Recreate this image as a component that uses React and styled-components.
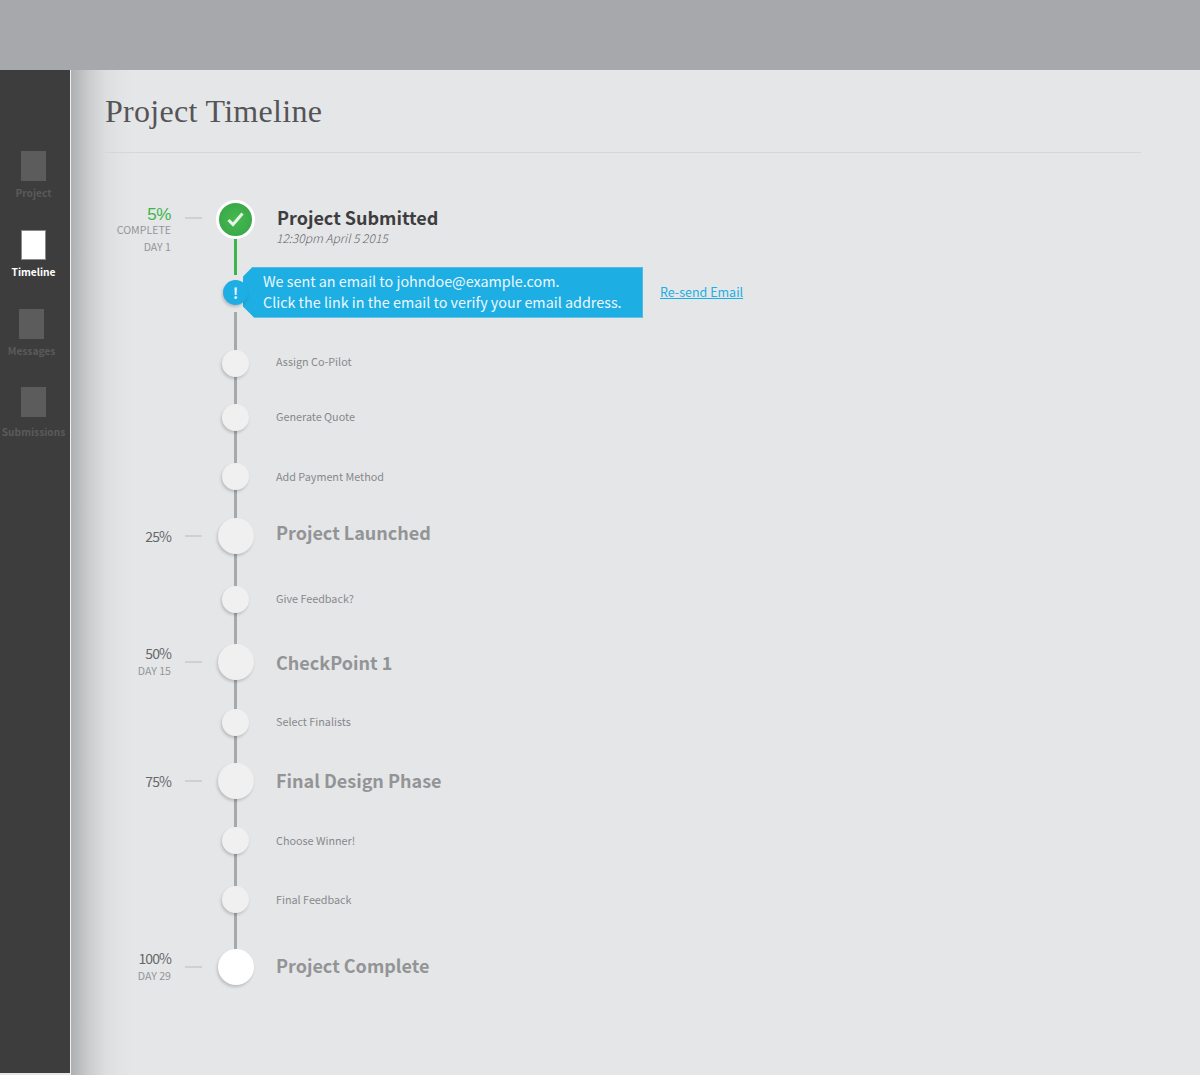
import React from "react";
import styled, { createGlobalStyle } from "styled-components";

const sans = `"Noto Sans CJK SC", "Noto Sans", sans-serif`;

const GlobalStyle = createGlobalStyle`
  html, body {
    margin: 0;
    padding: 0;
    background: #e5e6e8;
    font-family: ${sans};
  }
  * { box-sizing: border-box; }
`;

const Page = styled.div`
  width: 1200px;
  height: 1075px;
  overflow: hidden;
  display: flex;
  flex-direction: column;
`;

const TopBar = styled.div`
  height: 70px;
  flex: none;
  background: #a7a8ab;
`;

const Body = styled.div`
  flex: 1;
  display: flex;
  min-height: 0;
`;

const Sidebar = styled.nav`
  width: 71px;
  flex: none;
  height: 1003px;
  background: #3d3d3d;
  border-right: 1px solid #f2f2f3;
  padding-top: 81px;
  display: flex;
  flex-direction: column;
`;

const NavItem = styled.div`
  height: ${(p) => p.$height}px;
  display: flex;
  flex-direction: column;
  align-items: center;
  padding-right: ${(p) => p.$shift}px;
  font-size: 10.2px;
  font-weight: 700;
  line-height: 16px;
  white-space: nowrap;
  color: ${(p) => (p.$active ? "#ffffff" : "#5a5a5a")};
`;

const NavIcon = styled.div`
  width: 25px;
  height: 30px;
  margin-bottom: ${(p) => p.$gap}px;
  background: ${(p) => (p.$active ? "#ffffff" : "#5c5c5c")};
  border: ${(p) => (p.$active ? "1px solid #8b8b8b" : "none")};
`;

const Main = styled.main`
  flex: 1;
  padding: 0 59px 0 34px;
  background: linear-gradient(90deg, #aeafb1 0, #cbccce 18px, #dcdddf 34px, #e2e3e5 48px, #e5e6e8 62px);
`;

const Title = styled.h1`
  margin: 0;
  height: 83px;
  padding-top: 21px;
  border-bottom: 1px solid #d6d7d9;
  font-family: "Liberation Serif", serif;
  font-size: 32px;
  line-height: 40px;
  font-weight: 400;
  letter-spacing: 0.3px;
  color: #555557;
`;

const Timeline = styled.div`
  padding-top: 46px;
`;

const Row = styled.div`
  position: relative;
  height: ${(p) => p.$height}px;
  display: grid;
  grid-template-columns: 66px 14px 17px 14px 39px 21px 1fr;
  grid-template-rows: 40px;
  align-items: center;

  /* connector down to the next stop */
  &::before {
    content: "";
    display: ${(p) => (p.$last ? "none" : "block")};
    position: absolute;
    left: 129px;
    top: 20px;
    width: 3px;
    height: ${(p) => p.$height}px;
    background: #a7a8aa;
  }
`;

const GreenLine = styled.div`
  position: absolute;
  left: 129px;
  top: 39px;
  width: 3px;
  height: 37px;
  background: #3cb54a;
  z-index: 1;
`;

const GapMask = styled.div`
  position: absolute;
  left: 127px;
  top: 0;
  width: 7px;
  height: 40px;
  background: #e5e6e8;
`;

const Stat = styled.div`
  text-align: right;
  transform: translateY(${(p) => p.$offset || 0}px);
`;

const Percent = styled.div`
  font-family: ${(p) => (p.$green ? `"Liberation Sans", sans-serif` : sans)};
  font-size: ${(p) => (p.$green ? 17 : 14)}px;
  line-height: 15px;
  letter-spacing: ${(p) => (p.$green ? -0.4 : -0.9)}px;
  color: ${(p) => (p.$green ? "#3cb54a" : "#666769")};
`;

const StatLine = styled.div`
  font-size: 10.6px;
  line-height: 15px;
  margin-top: ${(p) => p.$gap || 0}px;
  color: #949597;
`;

const Dash = styled.div`
  grid-column: 3;
  height: 2px;
  background: #cfd0d0;
  transform: translateY(${(p) => p.$nudge || 0}px);
`;

const NodeCell = styled.div`
  grid-column: 5;
  position: relative;
  z-index: 2;
  display: flex;
  justify-content: center;
  align-items: center;
`;

const nodeSize = { small: 27, big: 36, done: 39, alert: 25 };

const Node = styled.div`
  width: ${(p) => nodeSize[p.$kind]}px;
  height: ${(p) => nodeSize[p.$kind]}px;
  border-radius: 50%;
  display: flex;
  align-items: center;
  justify-content: center;
  background: ${(p) =>
    p.$kind === "done"
      ? "radial-gradient(circle, #45b94f 0, #36a447 100%)"
      : p.$kind === "alert"
      ? "#1daee3"
      : p.$white
      ? "#ffffff"
      : "#f0f0f1"};
  border: ${(p) => (p.$kind === "done" ? "3px solid #ffffff" : "none")};
  box-shadow: ${(p) => (p.$kind === "done" ? "none" : "-1px 2px 3px rgba(0, 0, 0, 0.18)")};
  color: #eef7fc;
  font-size: 15px;
  font-weight: 700;
`;

const Content = styled.div`
  grid-column: 7;
  display: flex;
  align-items: center;
  min-width: 0;
  white-space: nowrap;
`;

const StepLabel = styled.div`
  font-size: 10.8px;
  color: #88898b;
  transform: translateY(${(p) => p.$nudge || 0}px);
`;

const Milestone = styled.div`
  font-size: 18px;
  font-weight: 700;
  color: #939496;
  transform: translateY(${(p) => p.$nudge || 0}px);
`;

const HeadingBlock = styled.div`
  padding-top: 13px;
`;

const Heading = styled.div`
  font-size: 18px;
  line-height: 24px;
  font-weight: 700;
  color: #3d3d3f;
  margin-left: 1px;
`;

const Time = styled.div`
  font-size: 12px;
  line-height: 18px;
  font-style: italic;
  font-weight: 300;
  color: #66676a;
`;

const Bubble = styled.div`
  width: 400px;
  height: 51px;
  margin-left: -33px;
  padding: 2px 0 0 20px;
  background: #1daee3;
  border: 1px solid #4dbbe6;
  border-left: none;
  clip-path: polygon(10px 0, 100% 0, 100% 100%, 11px 100%, 0 40px, 0 10px);
  font-size: 14.35px;
  line-height: 21px;
  color: #eef7fc;
`;

const Resend = styled.a`
  margin-left: 17px;
  font-size: 12.5px;
  color: #1daee3;
  text-decoration: underline;
  transform: translateY(-1px);
`;

const CheckMark = () => (
  <svg width="17" height="15" viewBox="0 0 17 15" fill="none">
    <polyline points="1.5,8 6,12.5 15.5,1.5" stroke="#e9f4e6" strokeWidth="3" />
  </svg>
);

const stops = [
  { kind: "step", label: "Assign Co-Pilot", height: 54, nudge: -2 },
  { kind: "step", label: "Generate Quote", height: 59, nudge: -1 },
  { kind: "step", label: "Add Payment Method", height: 60 },
  { kind: "mile", label: "Project Launched", percent: "25%", height: 63, nudge: -4 },
  { kind: "step", label: "Give Feedback?", height: 63, nudge: -1 },
  { kind: "mile", label: "CheckPoint 1", percent: "50%", day: "DAY 15", height: 60 },
  { kind: "step", label: "Select Finalists", height: 59, nudge: -1 },
  { kind: "mile", label: "Final Design Phase", percent: "75%", height: 59, nudge: -1 },
  { kind: "step", label: "Choose Winner!", height: 59 },
  { kind: "step", label: "Final Feedback", height: 68 },
  { kind: "mile", label: "Project Complete", percent: "100%", day: "DAY 29", height: 60, nudge: -2, white: true, last: true },
];

const navItems = [
  { label: "Project", height: 79, shift: 3, gap: 4 },
  { label: "Timeline", height: 79, shift: 3, gap: 4, active: true },
  { label: "Messages", height: 78, shift: 7, gap: 4 },
  { label: "Submissions", height: 78, shift: 3, gap: 7 },
];

export default function App() {
  return (
    <Page>
      <GlobalStyle />
      <TopBar />
      <Body>
        <Sidebar>
          {navItems.map((item) => (
            <NavItem key={item.label} $height={item.height} $active={item.active} $shift={item.shift}>
              <NavIcon $active={item.active} $gap={item.gap} />
              {item.label}
            </NavItem>
          ))}
        </Sidebar>
        <Main>
          <Title>Project Timeline</Title>
          <Timeline>
            <Row $height={73}>
              <GreenLine />
              <Stat $offset={11}>
                <Percent $green>5%</Percent>
                <StatLine>COMPLETE</StatLine>
                <StatLine $gap={2}>DAY 1</StatLine>
              </Stat>
              <Dash $nudge={-1} />
              <NodeCell>
                <Node $kind="done">
                  <CheckMark />
                </Node>
              </NodeCell>
              <Content>
                <HeadingBlock>
                  <Heading>Project Submitted</Heading>
                  <Time>12:30pm April 5 2015</Time>
                </HeadingBlock>
              </Content>
            </Row>
            <Row $height={71}>
              <GapMask />
              <NodeCell>
                <Node $kind="alert">!</Node>
              </NodeCell>
              <Content>
                <Bubble>
                  We sent an email to johndoe@example.com.
                  <br />
                  Click the link in the email to verify your email address.
                </Bubble>
                <Resend href="#">Re-send Email</Resend>
              </Content>
            </Row>
            {stops.map((stop) => (
              <Row key={stop.label} $height={stop.height} $last={stop.last}>
                {stop.percent && (
                  <Stat>
                    <Percent>{stop.percent}</Percent>
                    {stop.day && <StatLine $gap={2}>{stop.day}</StatLine>}
                  </Stat>
                )}
                {stop.percent && <Dash />}
                <NodeCell>
                  <Node $kind={stop.kind === "mile" ? "big" : "small"} $white={stop.white} />
                </NodeCell>
                <Content>
                  {stop.kind === "mile" ? (
                    <Milestone $nudge={stop.nudge}>{stop.label}</Milestone>
                  ) : (
                    <StepLabel $nudge={stop.nudge}>{stop.label}</StepLabel>
                  )}
                </Content>
              </Row>
            ))}
          </Timeline>
        </Main>
      </Body>
    </Page>
  );
}
